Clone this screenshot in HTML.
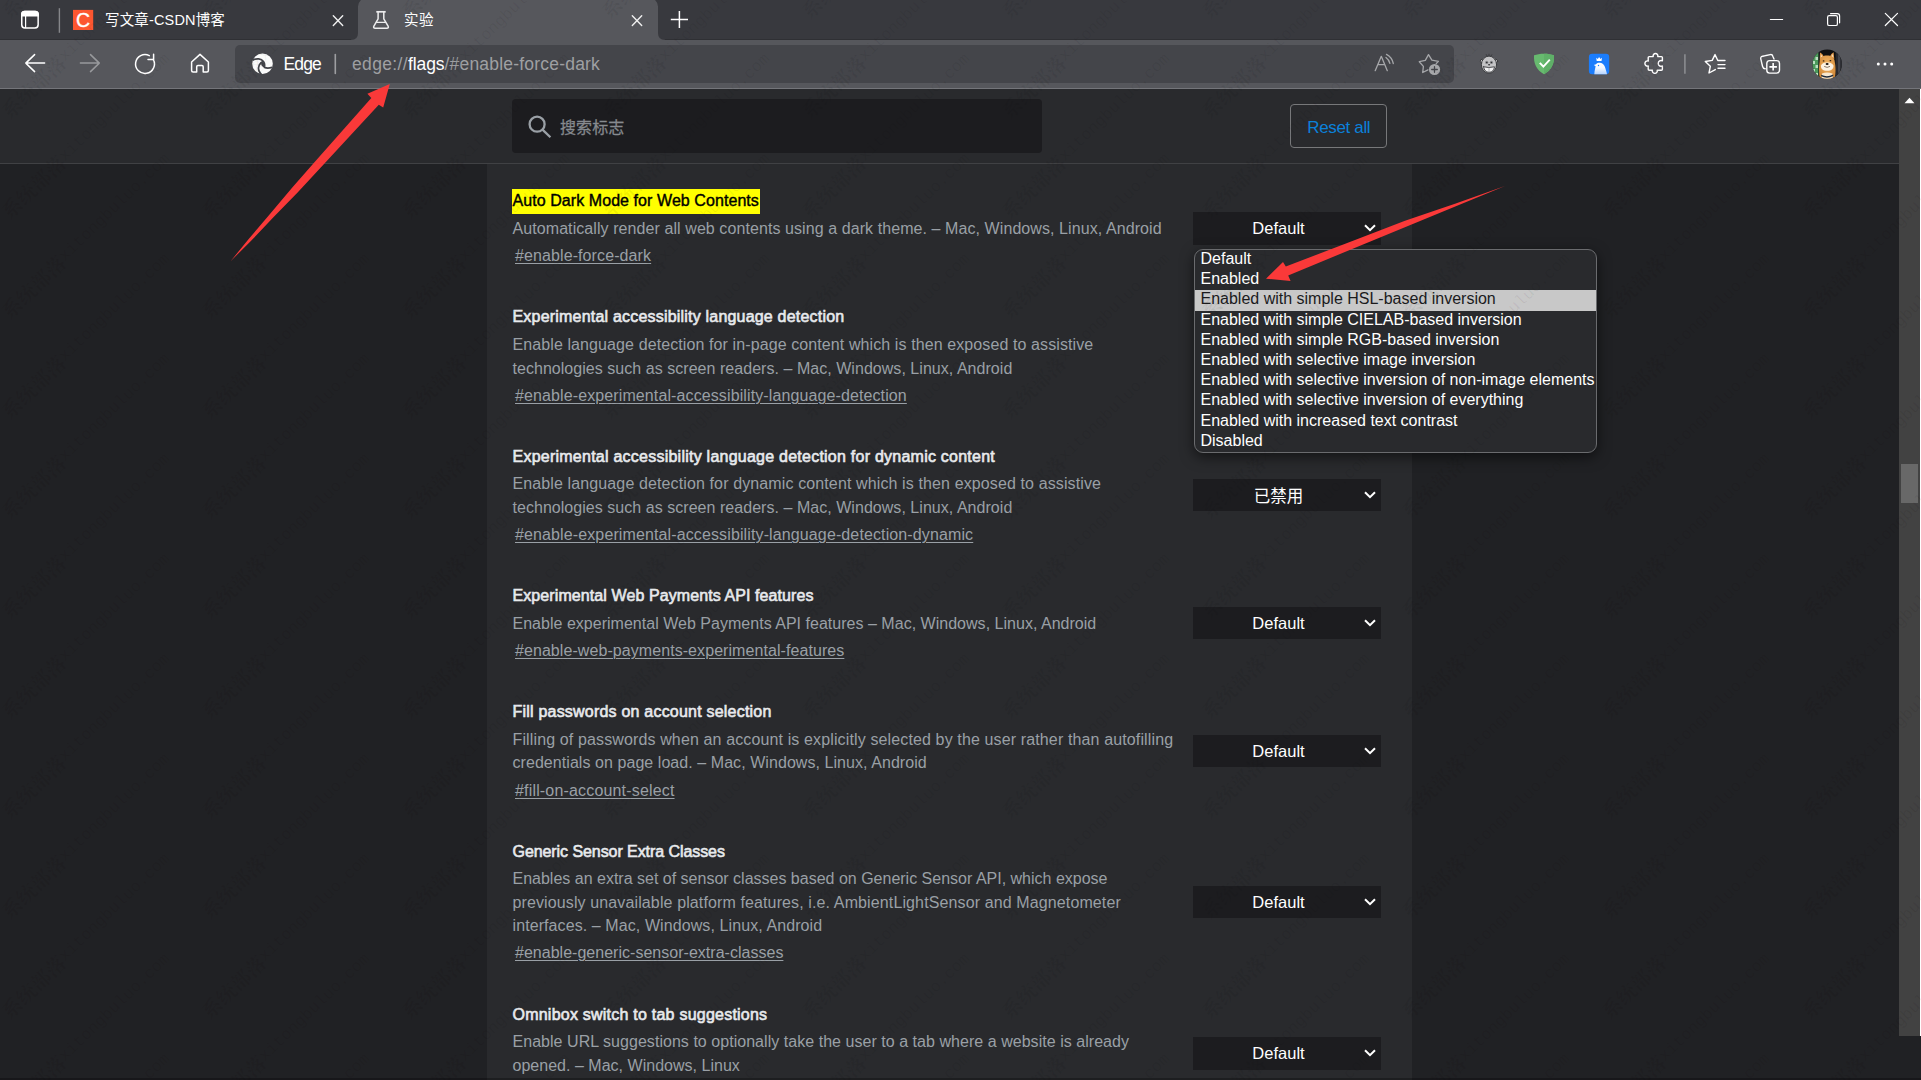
<!DOCTYPE html>
<html lang="zh-CN">
<head>
<meta charset="utf-8">
<title>实验</title>
<style>
*{box-sizing:border-box;margin:0;padding:0}
html,body{width:1921px;height:1080px;overflow:hidden;background:#202124}
body{position:relative;font-family:"Liberation Sans","Noto Sans CJK SC",sans-serif;color:#e8eaed;-webkit-font-smoothing:antialiased}
.abs{position:absolute}
.x{position:absolute;white-space:pre;display:block}
.x.t{font-size:16px;color:#e8eaed;-webkit-text-stroke:.6px #e8eaed}
.x.d{font-size:16px;color:#9aa0a6}
.x.l{font-size:16px;color:#9aa0a6;text-decoration:underline;text-decoration-thickness:1px;text-underline-offset:2px}
.x.hl{color:#000;-webkit-text-stroke:.4px #000}
.x.tab{font-size:14.5px;color:#fff}
.x.url{font-size:17.5px;color:#9fa0a3}
.x.w{color:#fff}
.x.ph{font-size:16px;color:#868a8f;-webkit-text-stroke:.25px #868a8f}
.x.rst{font-size:17px;color:#0b81da}
#tabstrip{left:0;top:0;width:1921px;height:40px;background:#38393e}
#toolbar{left:0;top:40px;width:1921px;height:48px;background:#56575c}
#tbline{left:0;top:88px;width:1921px;height:1px;background:#74757a}
#urlbox{left:235px;top:45px;width:1219px;height:38px;border-radius:5px;background:#44454a}
#header{left:0;top:89px;width:1899px;height:74px;background:#292a2d}
#hline{left:0;top:163px;width:1899px;height:1px;background:#404144}
#col{left:487px;top:164px;width:925px;height:916px;background:#292a2d}
#search{left:512px;top:99px;width:530px;height:54px;border-radius:4px;background:#1c1c1f}
#reset{left:1290px;top:104px;width:97px;height:44px;border:1px solid #77787a;border-radius:4px}
#hlbox{left:512px;top:189px;width:248px;height:25px;background:#ffff00}
.sel{position:absolute;left:1193px;width:188px;height:33px;background:#1c1c1f;color:#fff;font-size:16.5px;line-height:33px}
.sel span{position:absolute;left:0;width:171px;text-align:center;top:0}
.sel svg{position:absolute;left:171px;top:12px}
#popup{left:1194px;top:249px;width:403px;height:204px;border:1px solid #6a6b6e;border-radius:9px;background:#292a2d;box-shadow:0 4px 14px rgba(0,0,0,.55);overflow:hidden}
#popup div{position:absolute;left:0;width:401px;height:20.25px;line-height:20.25px;padding-left:5.5px;font-size:16px;color:#fff;white-space:pre}
#popup div.on{color:#1b1b1d}
#popup i{position:absolute;left:0;top:40px;width:401px;height:21px;background:#c8c8c8}
#sbar{left:1899px;top:89px;width:21px;height:947px;background:#424242}
#sthumb{left:1901px;top:464px;width:17px;height:39px;background:#686868}
#sedge{left:1920px;top:89px;width:1px;height:947px;background:#fff}
#wm{left:0;top:0;width:1921px;height:1080px;overflow:hidden;pointer-events:none}
#wm b{position:absolute;height:20px;line-height:20px;white-space:nowrap;transform-origin:0 50%;transform:rotate(-44.07deg);font:bold 20px "Liberation Serif","Noto Serif CJK SC",serif;color:rgba(0,0,0,.06)}
#wm b i{font:normal 16.35px "Liberation Mono",monospace;vertical-align:4px}
</style>
</head>
<body>
<div id="tabstrip" class="abs"></div>
<div id="toolbar" class="abs"></div>
<div id="tbline" class="abs"></div>
<svg class="abs" style="left:0;top:0" width="1921" height="89" viewBox="0 0 1921 89" fill="none" stroke-linecap="round" stroke-linejoin="round">
<!-- active tab -->
<path d="M0 39.5H351" stroke="#2f3034" stroke-width="1" stroke-linecap="butt"/><path d="M665 39.5H1921" stroke="#2f3034" stroke-width="1" stroke-linecap="butt"/>
<path d="M351 40Q358 40 358 33V6.4A8 8 0 0 1 366 -1.6H650A8 8 0 0 1 658 6.4V33Q658 40 665 40Z" fill="#56575c"/>
<!-- url box -->
<rect x="235" y="45" width="1219" height="38" rx="5" fill="#44454a"/>
<!-- tab actions icon -->
<g stroke="#fff" stroke-width="1.5">
<rect x="21.75" y="11.55" width="16.4" height="16.5" rx="3.2"/>
<path d="M21 16.4V14.3Q21 10.8 24.5 10.8H35.4Q38.9 10.8 38.9 14.3V16.4Z" fill="#fff" stroke="none"/>
<path d="M25.6 16V28" stroke-width="1.2" stroke-linecap="butt"/>
</g>
<path d="M59.4 8.2V32.8" stroke="#85868a" stroke-width="1.4" stroke-linecap="butt"/>
<!-- csdn favicon -->
<rect x="73" y="9.9" width="20.2" height="20.1" fill="#fc5630"/>
<!-- tab close buttons -->
<g stroke="#f0f0f0" stroke-width="1.4">
<path d="M333.3 15.8L342.7 25.4M342.7 15.8L333.3 25.4"/>
<path d="M632.3 15.8L641.7 25.4M641.7 15.8L632.3 25.4"/>
</g>
<!-- flask -->
<g stroke="#ededee" stroke-width="1.5">
<path d="M376.3 11.8H385.7" stroke-width="1.7" stroke-linecap="butt"/>
<path d="M378.1 12V18.8L373.9 26.2Q372.9 28.2 375.2 28.2H386.8Q389.1 28.2 388.1 26.2L383.8 18.8V12"/>
<path d="M376.4 22.3H385.5" stroke-width="1.3"/>
</g>
<!-- new tab plus -->
<path d="M670.8 19.5H688M679.4 10.9V28" stroke="#fff" stroke-width="1.5" stroke-linecap="butt"/>
<!-- window controls -->
<g stroke="#fff" stroke-width="1.2">
<path d="M1770.4 19.5H1782.6"/>
<rect x="1827.6" y="15.7" width="9.8" height="9.8" rx="1.6"/>
<path d="M1830.6 13.7H1837.3Q1839.6 13.7 1839.6 16V22.8"/>
<path d="M1885.3 13.3L1897.5 25.5M1897.5 13.3L1885.3 25.5"/>
</g>
<!-- nav: back -->
<g stroke="#fff" stroke-width="1.5">
<path d="M44.6 63.1H25.8M34.6 54.6L25.8 63.1L34.6 71.6"/>
</g>
<g stroke="#98999c" stroke-width="1.5">
<path d="M80.4 63.1H99.3M90.5 54.6L99.3 63.1L90.5 71.6"/>
</g>
<!-- refresh -->
<g stroke="#fff" stroke-width="1.5">
<path d="M153.3 59.5A9.45 9.45 0 1 1 149.3 55.6"/>
<path d="M153.6 54.2V59.4H148"/>
</g>
<!-- home -->
<g stroke="#fff" stroke-width="1.5">
<path d="M191.6 62L200 54.4L208.4 62V70.4Q208.4 71.9 206.9 71.9H203.2V66.8Q203.2 65.6 202 65.6H197.9Q196.7 65.6 196.7 66.8V71.9H193.1Q191.6 71.9 191.6 70.4Z"/>
</g>
<!-- edge logo -->
<circle cx="262.5" cy="63.75" r="10.3" fill="#fbfbfb" stroke="none"/>
<g stroke="#44454a" stroke-width="1.7" fill="none" stroke-linecap="butt">
<path d="M252.6 60.2C256.5 57.9 261.3 58.6 263.6 61.8C264.7 63.4 264.9 65 264.4 66.6"/>
<path d="M263.2 65.2C264 67.6 267 69 272.2 67.4"/>
<path d="M263.4 61.4C259.6 62.6 257.6 66.8 258.9 70.6C259.4 72.1 260.3 73.4 261.4 74.6"/>
</g>
<path d="M261.2 62.4Q264.6 62 264.9 65.6Q264.4 67.6 262.6 66.4Q260.6 64.8 261.2 62.4Z" fill="#44454a" stroke="none"/>
<!-- divider in url -->
<path d="M335.3 54.5V73.5" stroke="#9d9ea1" stroke-width="1.6"/>
<!-- read aloud -->
<g stroke="#a6a7aa" stroke-width="1.3">
<path d="M1375.2 70.7L1381.3 56.3L1387.3 70.7M1377.9 64.7H1384.7"/>
<path d="M1386 57.5A10.4 10.4 0 0 1 1389.9 63.3"/>
<path d="M1386.5 54.4A13.5 13.5 0 0 1 1393.3 63.5"/>
</g>
<!-- add favorite star -->
<g stroke="#a6a7aa" stroke-width="1.3">
<path d="M1436.2 63.6L1438.4 61.3L1431.9 60.2L1428.5 54.6L1425.3 60.4L1419.3 61.7L1423.4 66.4L1422.7 72.5L1427.9 69.9"/>
</g>
<circle cx="1434.5" cy="69.5" r="5.6" fill="#a6a7aa" stroke="none"/>
<path d="M1431.7 69.5H1437.3M1434.5 66.7V72.3" stroke="#44454a" stroke-width="1.3"/>
<!-- tampermonkey-like -->
<g>
<path d="M1487.3 56.3L1486.3 54.6M1489 55.8V54.2M1490.7 56.3L1491.8 54.7" stroke="#3a3b3e" stroke-width="1"/>
<circle cx="1482.3" cy="61.2" r="2" fill="#c4c4c6" stroke="#3a3b3e" stroke-width="1"/>
<circle cx="1495.7" cy="61.2" r="2" fill="#c4c4c6" stroke="#3a3b3e" stroke-width="1"/>
<ellipse cx="1489" cy="64.7" rx="7.6" ry="8.6" fill="#c4c4c6" stroke="#3a3b3e" stroke-width="1"/>
<circle cx="1486.7" cy="62.4" r="1.7" fill="#8d8e91" stroke="none"/>
<circle cx="1491.4" cy="62.4" r="1.7" fill="#8d8e91" stroke="none"/>
<circle cx="1486.8" cy="62.5" r=".8" fill="#2c2d30" stroke="none"/>
<circle cx="1491.4" cy="62.5" r=".8" fill="#2c2d30" stroke="none"/>
<ellipse cx="1489.1" cy="64.8" rx="1.1" ry=".7" fill="#3a3b3e" stroke="none"/>
<path d="M1483.6 66.8Q1489 68.3 1494.5 66.8Q1493.8 72.3 1489 72.3Q1484.3 72.3 1483.6 66.8Z" fill="#f1f1f2" stroke="#3a3b3e" stroke-width=".9"/>
<path d="M1489 67.6V72" stroke="#8d8e91" stroke-width=".6"/>
</g>
<!-- adguard shield -->
<path d="M1544 53.7C1547.8 53.7 1551.3 54.2 1554 55.3C1554.5 63.4 1551.6 70.3 1544 74.3C1536.4 70.3 1533.5 63.4 1534 55.3C1536.7 54.2 1540.2 53.7 1544 53.7Z" fill="#67ba6f" stroke="none"/>
<path d="M1544 53.7C1547.8 53.7 1551.3 54.2 1554 55.3C1554.5 63.4 1551.6 70.3 1544 74.3Z" fill="#5fb068" stroke="none"/>
<path d="M1539.8 62.8L1543.4 66.7L1549.8 59.6" stroke="#fff" stroke-width="1.9" stroke-linecap="butt" stroke-linejoin="miter"/>
<!-- blue ext -->
<linearGradient id="bd" x1="0" y1="0" x2="0" y2="1"><stop offset="0" stop-color="#fff"/><stop offset=".45" stop-color="#f3f8ff"/><stop offset="1" stop-color="#b5d4ff"/></linearGradient>
<rect x="1588.9" y="53.7" width="20.3" height="20.5" rx="3.3" fill="#1b7dfc" stroke="none"/>
<path d="M1594.3 74.2C1594.6 70.5 1595.3 68.2 1595.6 66.3L1593.8 65L1596 64.2C1597 62.9 1598.5 62.6 1600 62.7C1603 63 1604.5 65.2 1605.3 68C1606 70.4 1606.7 72.3 1607 74.2Z" fill="url(#bd)" stroke="none"/>
<circle cx="1598.5" cy="65.5" r=".7" fill="#1b7dfc" stroke="none"/>
<path d="M1596.7 60.9L1596.2 57.8L1597.8 58.9L1599.1 57.1L1600.4 58.9L1602 57.8L1601.5 60.9Z" fill="#fff" stroke="none"/>
<!-- puzzle -->
<path d="M1649.2 56.6H1653.2A2.4 2.4 0 1 1 1657.8 56.6H1661.4Q1662.4 56.6 1662.4 57.6V60.8A2.9 2.9 0 1 0 1662.4 66V69.2Q1662.4 70.2 1661.4 70.2H1657.2A2.5 2.5 0 1 1 1652.4 70.2H1649.2Q1648.2 70.2 1648.2 69.2V66A2.6 2.6 0 1 1 1648.2 61V57.6Q1648.2 56.6 1649.2 56.6Z" stroke="#fff" stroke-width="1.4"/>
<path d="M1684.9 54.3V73.7" stroke="#85868a" stroke-width="1.8" stroke-linecap="butt"/>
<!-- favorites -->
<g stroke="#fff" stroke-width="1.4">
<path d="M1725 60.5H1717.8L1715 54.6L1712.2 60.4L1705.3 61.5L1710.3 66.3L1709 73L1715.3 69.6"/>
<path d="M1718 64.6H1725M1718 68.2H1725"/>
</g>
<!-- collections -->
<g stroke="#fff" stroke-width="1.4">
<path d="M1774 59L1772.8 56.2Q1772.3 54.2 1770.2 54.6L1762.6 56.2Q1760.2 56.8 1760.8 59.2L1762.6 66.5Q1763.2 68.8 1765.2 68.7"/>
<rect x="1766.8" y="60.6" width="12.7" height="12.5" rx="2.8"/>
<path d="M1769.4 66.9H1776.9M1773.15 63.1V70.6" stroke-width="1.6" stroke-linecap="butt"/>
</g>
<!-- avatar -->
<clipPath id="av"><circle cx="1827.2" cy="64.1" r="14.7"/></clipPath>
<radialGradient id="fur" cx=".5" cy=".35" r=".7"><stop offset="0" stop-color="#f0b565"/><stop offset="1" stop-color="#cf8333"/></radialGradient>
<g clip-path="url(#av)" stroke="none">
<rect x="1812" y="49" width="31" height="31" fill="#0f0f10"/>
<rect x="1812" y="49" width="6.6" height="31" fill="#4c9a5b"/>
<path d="M1813 53h2v3h-2zM1815.5 57h2.5v3h-2.5zM1813 61h2v3h-2zM1815.5 65h2.5v3h-2.5zM1813 69h2v3h-2zM1815.5 73h2.5v3h-2.5z" fill="#b9dfc0"/>
<rect x="1818.6" y="49" width="1.2" height="31" fill="#1c1d20"/>
<rect x="1835.6" y="49" width="2.4" height="31" fill="#2a2b30"/>
<rect x="1838" y="49" width="2" height="31" fill="#45474e"/>
<rect x="1840" y="49" width="3" height="31" fill="#2f3035"/>
<path d="M1819.8 59.5L1820 52.6Q1822.5 53.6 1824 57ZM1834.3 59L1833.6 52.2Q1831 53.4 1829.8 56.8Z" fill="#e09a4c"/>
<path d="M1820.8 57.5L1820.9 54.4L1822.6 56.6ZM1833.3 57.2L1832.9 54L1831.3 56.2Z" fill="#f3d9b8"/>
<path d="M1819.6 62C1819.6 57.5 1823 55.6 1827 55.6C1831 55.6 1834.6 57.5 1834.8 62C1835.6 66 1836.2 72 1834.5 80H1819.8C1818.6 72 1819 66 1819.6 62Z" fill="url(#fur)"/>
<path d="M1821 65.5C1822 62.8 1825 62.4 1827.1 62.4C1829.2 62.4 1832.4 62.8 1833.4 65.5C1834 68.5 1831.5 70.8 1827.1 70.8C1822.8 70.8 1820.4 68.5 1821 65.5Z" fill="#fbf1e2"/>
<path d="M1822 73.5Q1827 71.5 1832.5 73.5L1833 80H1821.5Z" fill="#f6e7d0"/>
<path d="M1821.2 74.8Q1827 77.8 1833.2 74.6L1833.3 76Q1827 79.2 1821.2 76.2Z" fill="#1f2a3a"/>
<ellipse cx="1827.1" cy="64" rx="1.5" ry="1.1" fill="#15100d"/>
<path d="M1824.5 66.6Q1827.1 68.4 1829.7 66.6" stroke="#3b2a20" stroke-width=".6" fill="none"/>
<ellipse cx="1823.6" cy="60.9" rx=".9" ry=".6" fill="#2a1a10"/>
<ellipse cx="1830.4" cy="60.7" rx=".9" ry=".6" fill="#2a1a10"/>
</g>
<!-- menu dots -->
<g fill="#fff" stroke="none"><circle cx="1878.3" cy="64" r="1.5"/><circle cx="1885" cy="64" r="1.5"/><circle cx="1891.7" cy="64" r="1.5"/></g>
</svg>
<span class="abs" style="left:73px;top:9px;width:20.2px;height:22px;line-height:22px;text-align:center;color:#fff;font-size:19.5px;-webkit-text-stroke:.35px #fff">C</span>

<div id="header" class="abs"></div>
<div id="hline" class="abs"></div>
<div id="col" class="abs"></div>
<div id="search" class="abs"></div>
<div id="reset" class="abs"></div>
<div id="hlbox" class="abs"></div>
<div class="sel" style="top:212px;height:33px;line-height:33px"><span>Default</span><svg width="12" height="8" viewBox="0 0 12 8" fill="none"><path d="M1 1.2L6 6.2L11 1.2" stroke="#fff" stroke-width="2"/></svg></div>
<div class="sel" style="top:479px;height:32px;line-height:34px"><span>已禁用</span><svg width="12" height="8" viewBox="0 0 12 8" fill="none"><path d="M1 1.2L6 6.2L11 1.2" stroke="#fff" stroke-width="2"/></svg></div>
<div class="sel" style="top:607px;height:32px;line-height:32px"><span>Default</span><svg width="12" height="8" viewBox="0 0 12 8" fill="none"><path d="M1 1.2L6 6.2L11 1.2" stroke="#fff" stroke-width="2"/></svg></div>
<div class="sel" style="top:735px;height:32px;line-height:32px"><span>Default</span><svg width="12" height="8" viewBox="0 0 12 8" fill="none"><path d="M1 1.2L6 6.2L11 1.2" stroke="#fff" stroke-width="2"/></svg></div>
<div class="sel" style="top:886px;height:32px;line-height:32px"><span>Default</span><svg width="12" height="8" viewBox="0 0 12 8" fill="none"><path d="M1 1.2L6 6.2L11 1.2" stroke="#fff" stroke-width="2"/></svg></div>
<div class="sel" style="top:1037px;height:33px;line-height:33px"><span>Default</span><svg width="12" height="8" viewBox="0 0 12 8" fill="none"><path d="M1 1.2L6 6.2L11 1.2" stroke="#fff" stroke-width="2"/></svg></div>
<span class="x t hl" style="left:512.5px;top:190px;line-height:21px;letter-spacing:0.07px">Auto Dark Mode for Web Contents</span>
<span class="x d" style="left:512.5px;top:218px;line-height:21px;letter-spacing:0.08px">Automatically render all web contents using a dark theme. – Mac, Windows, Linux, Android</span>
<a class="x l" style="left:515px;top:245px;line-height:21px;letter-spacing:0.1px">#enable-force-dark</a>
<span class="x t" style="left:512.5px;top:306px;line-height:21px;letter-spacing:0.2px">Experimental accessibility language detection</span>
<span class="x d" style="left:512.5px;top:334px;line-height:21px;letter-spacing:0.1px">Enable language detection for in-page content which is then exposed to assistive</span>
<span class="x d" style="left:512.5px;top:358px;line-height:21px;letter-spacing:0.04px">technologies such as screen readers. – Mac, Windows, Linux, Android</span>
<a class="x l" style="left:515px;top:385px;line-height:21px;letter-spacing:0.11px">#enable-experimental-accessibility-language-detection</a>
<span class="x t" style="left:512.5px;top:446px;line-height:21px;letter-spacing:0.24px">Experimental accessibility language detection for dynamic content</span>
<span class="x d" style="left:512.5px;top:473px;line-height:21px;letter-spacing:0.12px">Enable language detection for dynamic content which is then exposed to assistive</span>
<span class="x d" style="left:512.5px;top:497px;line-height:21px;letter-spacing:0.04px">technologies such as screen readers. – Mac, Windows, Linux, Android</span>
<a class="x l" style="left:515px;top:524px;line-height:21px;letter-spacing:0.12px">#enable-experimental-accessibility-language-detection-dynamic</a>
<span class="x t" style="left:512.5px;top:585px;line-height:21px;letter-spacing:0.09px">Experimental Web Payments API features</span>
<span class="x d" style="left:512.5px;top:613px;line-height:21px;letter-spacing:0.02px">Enable experimental Web Payments API features – Mac, Windows, Linux, Android</span>
<a class="x l" style="left:515px;top:640px;line-height:21px;letter-spacing:0.07px">#enable-web-payments-experimental-features</a>
<span class="x t" style="left:512.5px;top:701px;line-height:21px;letter-spacing:0.21px">Fill passwords on account selection</span>
<span class="x d" style="left:512.5px;top:729px;line-height:21px;letter-spacing:0.13px">Filling of passwords when an account is explicitly selected by the user rather than autofilling</span>
<span class="x d" style="left:512.5px;top:752px;line-height:21px;letter-spacing:0.06px">credentials on page load. – Mac, Windows, Linux, Android</span>
<a class="x l" style="left:515px;top:780px;line-height:21px;letter-spacing:0.17px">#fill-on-account-select</a>
<span class="x t" style="left:512.5px;top:841px;line-height:21px;letter-spacing:-0.07px">Generic Sensor Extra Classes</span>
<span class="x d" style="left:512.5px;top:868px;line-height:21px">Enables an extra set of sensor classes based on Generic Sensor API, which expose</span>
<span class="x d" style="left:512.5px;top:892px;line-height:21px;letter-spacing:0.12px">previously unavailable platform features, i.e. AmbientLightSensor and Magnetometer</span>
<span class="x d" style="left:512.5px;top:915px;line-height:21px;letter-spacing:0.09px">interfaces. – Mac, Windows, Linux, Android</span>
<a class="x l" style="left:515px;top:942px;line-height:21px;letter-spacing:0.02px">#enable-generic-sensor-extra-classes</a>
<span class="x t" style="left:512.5px;top:1004px;line-height:21px;letter-spacing:0.23px">Omnibox switch to tab suggestions</span>
<span class="x d" style="left:512.5px;top:1031px;line-height:21px;letter-spacing:0.04px">Enable URL suggestions to optionally take the user to a tab where a website is already</span>
<span class="x d" style="left:512.5px;top:1055px;line-height:21px;letter-spacing:0.02px">opened. – Mac, Windows, Linux</span>
<span class="x tab" style="left:105px;top:11px;line-height:19px;letter-spacing:0.16px">写文章-CSDN博客</span>
<span class="x tab" style="left:404px;top:11px;line-height:19px;letter-spacing:0.5px">实验</span>
<span class="x url w" style="left:283.5px;top:53px;line-height:23px;letter-spacing:-0.84px">Edge</span>
<span class="x url" style="left:352px;top:53px;line-height:23px;letter-spacing:0.35px">edge://</span>
<span class="x url w" style="left:408px;top:53px;line-height:23px;letter-spacing:-0.09px">flags</span>
<span class="x url" style="left:444.5px;top:53px;line-height:23px;letter-spacing:0.2px">/#enable-force-dark</span>
<span class="x ph" style="left:560px;top:117px;line-height:21px;letter-spacing:0.12px">搜索标志</span>
<span class="x rst" style="left:1307.3px;top:117px;line-height:22px;letter-spacing:-0.35px">Reset all</span>
<div id="popup" class="abs">
<i></i>
<div style="top:-1px">Default</div>
<div style="top:19px">Enabled</div>
<div class="on" style="top:39px">Enabled with simple HSL-based inversion</div>
<div style="top:60px">Enabled with simple CIELAB-based inversion</div>
<div style="top:80px">Enabled with simple RGB-based inversion</div>
<div style="top:100px">Enabled with selective image inversion</div>
<div style="top:120px">Enabled with selective inversion of non-image elements</div>
<div style="top:140px">Enabled with selective inversion of everything</div>
<div style="top:161px">Enabled with increased text contrast</div>
<div style="top:181px">Disabled</div>
</div>
<div id="sbar" class="abs"></div>
<div id="sthumb" class="abs"></div>
<div id="sedge" class="abs"></div>
<div class="abs" style="left:0;top:1078px;width:1921px;height:2px;background:rgba(0,0,0,.28)"></div>
<svg class="abs" style="left:0;top:0;pointer-events:none" width="1921" height="1080" viewBox="0 0 1921 1080">
<!-- search icon -->
<g fill="none" stroke="#9aa0a6" stroke-width="2.3">
<circle cx="537.1" cy="124.2" r="7.5"/>
<path d="M542.5 129.6L550.4 137.3" stroke-linecap="butt"/>
</g>
<!-- scrollbar arrow -->
<path d="M1904.5 103.3L1909.5 97.7L1914.5 103.3Z" fill="#fff"/>
<!-- red arrows -->
<path d="M230.6 261.2L248.7 239L270.4 213.6L292.3 187.6L314.9 161.7L371.3 98L367.4 93.8L389.8 84.1L383.2 107.5L378.8 104.7L321 167.3L297.6 192.4L273.9 216.8L250.9 241Z" fill="#fa3939"/>
<path d="M1505 185.9L1455 203.7L1405 220.8L1355 239.9L1285.8 266.6L1283 262L1266 278.7L1290.6 280.9L1288.2 275.4Z" fill="#fa3939"/>
</svg>

<div id="wm" class="abs">
<b style="left:0.6px;top:0.7px">系统部落<i>xitongbuluo.com</i></b>
<b style="left:200.6px;top:0.7px">系统部落<i>xitongbuluo.com</i></b>
<b style="left:400.6px;top:0.7px">系统部落<i>xitongbuluo.com</i></b>
<b style="left:600.6px;top:0.7px">系统部落<i>xitongbuluo.com</i></b>
<b style="left:800.6px;top:0.7px">系统部落<i>xitongbuluo.com</i></b>
<b style="left:1000.6px;top:0.7px">系统部落<i>xitongbuluo.com</i></b>
<b style="left:1200.6px;top:0.7px">系统部落<i>xitongbuluo.com</i></b>
<b style="left:1400.6px;top:0.7px">系统部落<i>xitongbuluo.com</i></b>
<b style="left:1600.6px;top:0.7px">系统部落<i>xitongbuluo.com</i></b>
<b style="left:1800.6px;top:0.7px">系统部落<i>xitongbuluo.com</i></b>
<b style="left:0.6px;top:100.7px">系统部落<i>xitongbuluo.com</i></b>
<b style="left:200.6px;top:100.7px">系统部落<i>xitongbuluo.com</i></b>
<b style="left:400.6px;top:100.7px">系统部落<i>xitongbuluo.com</i></b>
<b style="left:600.6px;top:100.7px">系统部落<i>xitongbuluo.com</i></b>
<b style="left:800.6px;top:100.7px">系统部落<i>xitongbuluo.com</i></b>
<b style="left:1000.6px;top:100.7px">系统部落<i>xitongbuluo.com</i></b>
<b style="left:1200.6px;top:100.7px">系统部落<i>xitongbuluo.com</i></b>
<b style="left:1400.6px;top:100.7px">系统部落<i>xitongbuluo.com</i></b>
<b style="left:1600.6px;top:100.7px">系统部落<i>xitongbuluo.com</i></b>
<b style="left:1800.6px;top:100.7px">系统部落<i>xitongbuluo.com</i></b>
<b style="left:0.6px;top:200.7px">系统部落<i>xitongbuluo.com</i></b>
<b style="left:200.6px;top:200.7px">系统部落<i>xitongbuluo.com</i></b>
<b style="left:400.6px;top:200.7px">系统部落<i>xitongbuluo.com</i></b>
<b style="left:600.6px;top:200.7px">系统部落<i>xitongbuluo.com</i></b>
<b style="left:800.6px;top:200.7px">系统部落<i>xitongbuluo.com</i></b>
<b style="left:1000.6px;top:200.7px">系统部落<i>xitongbuluo.com</i></b>
<b style="left:1200.6px;top:200.7px">系统部落<i>xitongbuluo.com</i></b>
<b style="left:1400.6px;top:200.7px">系统部落<i>xitongbuluo.com</i></b>
<b style="left:1600.6px;top:200.7px">系统部落<i>xitongbuluo.com</i></b>
<b style="left:1800.6px;top:200.7px">系统部落<i>xitongbuluo.com</i></b>
<b style="left:0.6px;top:300.7px">系统部落<i>xitongbuluo.com</i></b>
<b style="left:200.6px;top:300.7px">系统部落<i>xitongbuluo.com</i></b>
<b style="left:400.6px;top:300.7px">系统部落<i>xitongbuluo.com</i></b>
<b style="left:600.6px;top:300.7px">系统部落<i>xitongbuluo.com</i></b>
<b style="left:800.6px;top:300.7px">系统部落<i>xitongbuluo.com</i></b>
<b style="left:1000.6px;top:300.7px">系统部落<i>xitongbuluo.com</i></b>
<b style="left:1200.6px;top:300.7px">系统部落<i>xitongbuluo.com</i></b>
<b style="left:1400.6px;top:300.7px">系统部落<i>xitongbuluo.com</i></b>
<b style="left:1600.6px;top:300.7px">系统部落<i>xitongbuluo.com</i></b>
<b style="left:1800.6px;top:300.7px">系统部落<i>xitongbuluo.com</i></b>
<b style="left:0.6px;top:400.7px">系统部落<i>xitongbuluo.com</i></b>
<b style="left:200.6px;top:400.7px">系统部落<i>xitongbuluo.com</i></b>
<b style="left:400.6px;top:400.7px">系统部落<i>xitongbuluo.com</i></b>
<b style="left:600.6px;top:400.7px">系统部落<i>xitongbuluo.com</i></b>
<b style="left:800.6px;top:400.7px">系统部落<i>xitongbuluo.com</i></b>
<b style="left:1000.6px;top:400.7px">系统部落<i>xitongbuluo.com</i></b>
<b style="left:1200.6px;top:400.7px">系统部落<i>xitongbuluo.com</i></b>
<b style="left:1400.6px;top:400.7px">系统部落<i>xitongbuluo.com</i></b>
<b style="left:1600.6px;top:400.7px">系统部落<i>xitongbuluo.com</i></b>
<b style="left:1800.6px;top:400.7px">系统部落<i>xitongbuluo.com</i></b>
<b style="left:0.6px;top:500.7px">系统部落<i>xitongbuluo.com</i></b>
<b style="left:200.6px;top:500.7px">系统部落<i>xitongbuluo.com</i></b>
<b style="left:400.6px;top:500.7px">系统部落<i>xitongbuluo.com</i></b>
<b style="left:600.6px;top:500.7px">系统部落<i>xitongbuluo.com</i></b>
<b style="left:800.6px;top:500.7px">系统部落<i>xitongbuluo.com</i></b>
<b style="left:1000.6px;top:500.7px">系统部落<i>xitongbuluo.com</i></b>
<b style="left:1200.6px;top:500.7px">系统部落<i>xitongbuluo.com</i></b>
<b style="left:1400.6px;top:500.7px">系统部落<i>xitongbuluo.com</i></b>
<b style="left:1600.6px;top:500.7px">系统部落<i>xitongbuluo.com</i></b>
<b style="left:1800.6px;top:500.7px">系统部落<i>xitongbuluo.com</i></b>
<b style="left:0.6px;top:600.7px">系统部落<i>xitongbuluo.com</i></b>
<b style="left:200.6px;top:600.7px">系统部落<i>xitongbuluo.com</i></b>
<b style="left:400.6px;top:600.7px">系统部落<i>xitongbuluo.com</i></b>
<b style="left:600.6px;top:600.7px">系统部落<i>xitongbuluo.com</i></b>
<b style="left:800.6px;top:600.7px">系统部落<i>xitongbuluo.com</i></b>
<b style="left:1000.6px;top:600.7px">系统部落<i>xitongbuluo.com</i></b>
<b style="left:1200.6px;top:600.7px">系统部落<i>xitongbuluo.com</i></b>
<b style="left:1400.6px;top:600.7px">系统部落<i>xitongbuluo.com</i></b>
<b style="left:1600.6px;top:600.7px">系统部落<i>xitongbuluo.com</i></b>
<b style="left:1800.6px;top:600.7px">系统部落<i>xitongbuluo.com</i></b>
<b style="left:0.6px;top:700.7px">系统部落<i>xitongbuluo.com</i></b>
<b style="left:200.6px;top:700.7px">系统部落<i>xitongbuluo.com</i></b>
<b style="left:400.6px;top:700.7px">系统部落<i>xitongbuluo.com</i></b>
<b style="left:600.6px;top:700.7px">系统部落<i>xitongbuluo.com</i></b>
<b style="left:800.6px;top:700.7px">系统部落<i>xitongbuluo.com</i></b>
<b style="left:1000.6px;top:700.7px">系统部落<i>xitongbuluo.com</i></b>
<b style="left:1200.6px;top:700.7px">系统部落<i>xitongbuluo.com</i></b>
<b style="left:1400.6px;top:700.7px">系统部落<i>xitongbuluo.com</i></b>
<b style="left:1600.6px;top:700.7px">系统部落<i>xitongbuluo.com</i></b>
<b style="left:1800.6px;top:700.7px">系统部落<i>xitongbuluo.com</i></b>
<b style="left:0.6px;top:800.7px">系统部落<i>xitongbuluo.com</i></b>
<b style="left:200.6px;top:800.7px">系统部落<i>xitongbuluo.com</i></b>
<b style="left:400.6px;top:800.7px">系统部落<i>xitongbuluo.com</i></b>
<b style="left:600.6px;top:800.7px">系统部落<i>xitongbuluo.com</i></b>
<b style="left:800.6px;top:800.7px">系统部落<i>xitongbuluo.com</i></b>
<b style="left:1000.6px;top:800.7px">系统部落<i>xitongbuluo.com</i></b>
<b style="left:1200.6px;top:800.7px">系统部落<i>xitongbuluo.com</i></b>
<b style="left:1400.6px;top:800.7px">系统部落<i>xitongbuluo.com</i></b>
<b style="left:1600.6px;top:800.7px">系统部落<i>xitongbuluo.com</i></b>
<b style="left:1800.6px;top:800.7px">系统部落<i>xitongbuluo.com</i></b>
<b style="left:0.6px;top:900.7px">系统部落<i>xitongbuluo.com</i></b>
<b style="left:200.6px;top:900.7px">系统部落<i>xitongbuluo.com</i></b>
<b style="left:400.6px;top:900.7px">系统部落<i>xitongbuluo.com</i></b>
<b style="left:600.6px;top:900.7px">系统部落<i>xitongbuluo.com</i></b>
<b style="left:800.6px;top:900.7px">系统部落<i>xitongbuluo.com</i></b>
<b style="left:1000.6px;top:900.7px">系统部落<i>xitongbuluo.com</i></b>
<b style="left:1200.6px;top:900.7px">系统部落<i>xitongbuluo.com</i></b>
<b style="left:1400.6px;top:900.7px">系统部落<i>xitongbuluo.com</i></b>
<b style="left:1600.6px;top:900.7px">系统部落<i>xitongbuluo.com</i></b>
<b style="left:1800.6px;top:900.7px">系统部落<i>xitongbuluo.com</i></b>
<b style="left:0.6px;top:1000.7px">系统部落<i>xitongbuluo.com</i></b>
<b style="left:200.6px;top:1000.7px">系统部落<i>xitongbuluo.com</i></b>
<b style="left:400.6px;top:1000.7px">系统部落<i>xitongbuluo.com</i></b>
<b style="left:600.6px;top:1000.7px">系统部落<i>xitongbuluo.com</i></b>
<b style="left:800.6px;top:1000.7px">系统部落<i>xitongbuluo.com</i></b>
<b style="left:1000.6px;top:1000.7px">系统部落<i>xitongbuluo.com</i></b>
<b style="left:1200.6px;top:1000.7px">系统部落<i>xitongbuluo.com</i></b>
<b style="left:1400.6px;top:1000.7px">系统部落<i>xitongbuluo.com</i></b>
<b style="left:1600.6px;top:1000.7px">系统部落<i>xitongbuluo.com</i></b>
<b style="left:1800.6px;top:1000.7px">系统部落<i>xitongbuluo.com</i></b>
<b style="left:0.6px;top:1100.7px">系统部落<i>xitongbuluo.com</i></b>
<b style="left:200.6px;top:1100.7px">系统部落<i>xitongbuluo.com</i></b>
<b style="left:400.6px;top:1100.7px">系统部落<i>xitongbuluo.com</i></b>
<b style="left:600.6px;top:1100.7px">系统部落<i>xitongbuluo.com</i></b>
<b style="left:800.6px;top:1100.7px">系统部落<i>xitongbuluo.com</i></b>
<b style="left:1000.6px;top:1100.7px">系统部落<i>xitongbuluo.com</i></b>
<b style="left:1200.6px;top:1100.7px">系统部落<i>xitongbuluo.com</i></b>
<b style="left:1400.6px;top:1100.7px">系统部落<i>xitongbuluo.com</i></b>
<b style="left:1600.6px;top:1100.7px">系统部落<i>xitongbuluo.com</i></b>
<b style="left:1800.6px;top:1100.7px">系统部落<i>xitongbuluo.com</i></b>
<b style="left:0.6px;top:1200.7px">系统部落<i>xitongbuluo.com</i></b>
<b style="left:200.6px;top:1200.7px">系统部落<i>xitongbuluo.com</i></b>
<b style="left:400.6px;top:1200.7px">系统部落<i>xitongbuluo.com</i></b>
<b style="left:600.6px;top:1200.7px">系统部落<i>xitongbuluo.com</i></b>
<b style="left:800.6px;top:1200.7px">系统部落<i>xitongbuluo.com</i></b>
<b style="left:1000.6px;top:1200.7px">系统部落<i>xitongbuluo.com</i></b>
<b style="left:1200.6px;top:1200.7px">系统部落<i>xitongbuluo.com</i></b>
<b style="left:1400.6px;top:1200.7px">系统部落<i>xitongbuluo.com</i></b>
<b style="left:1600.6px;top:1200.7px">系统部落<i>xitongbuluo.com</i></b>
<b style="left:1800.6px;top:1200.7px">系统部落<i>xitongbuluo.com</i></b>
</div>
</body>
</html>
